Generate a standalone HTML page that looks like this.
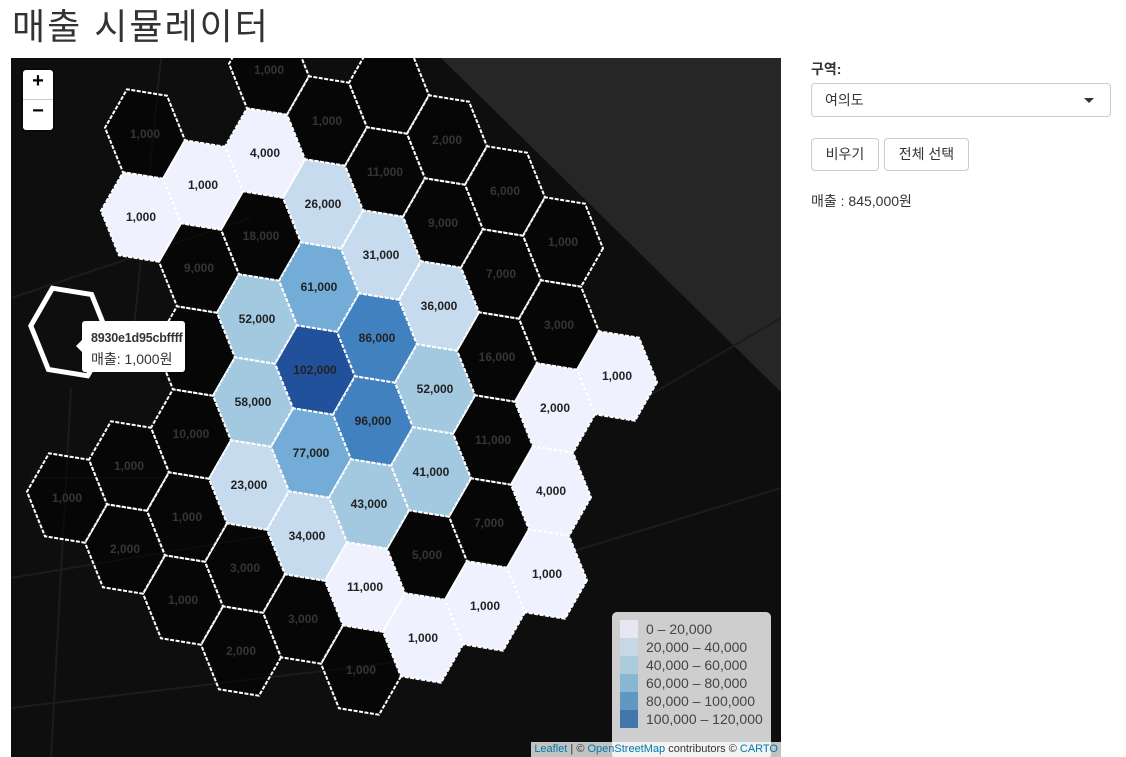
<!DOCTYPE html>
<html><head><meta charset="utf-8"><style>
*{box-sizing:border-box}
body{margin:0;width:1126px;height:757px;overflow:hidden;background:#fff;font-family:"Liberation Sans","Noto Sans CJK KR",sans-serif;color:#333;position:relative}
h1{position:absolute;left:12px;top:-2px;margin:0;font-size:36px;font-weight:400;font-family:"Liberation Sans","Noto Sans CJK KR",sans-serif;color:#333;letter-spacing:2px}
#map{position:absolute;left:11px;top:58px;width:770px;height:699px;overflow:hidden;background:#0e0e0e}
.zoom{position:absolute;left:12px;top:12px;width:30px;height:60px;background:#fff;border-radius:3px;box-shadow:0 0 0 2px rgba(0,0,0,.25)}
.zoom div{height:30px;line-height:28px;text-align:center;font:bold 20px "Liberation Sans",sans-serif;color:#000}
.zoom div:first-child{border-bottom:1px solid #ccc}
.tip{position:absolute;left:71px;top:263px;width:103px;height:51px;background:#fff;border-radius:3px;padding:6px 0 0 9px;font-size:14px;color:#333;line-height:21px;white-space:nowrap}
.tip b{font-size:12.5px;letter-spacing:-0.2px}
.tip:before{content:"";position:absolute;left:-6px;top:19px;border:6px solid transparent;border-left:0;border-right-color:#fff}
.legend{position:absolute;left:601px;top:554px;width:159px;height:147px;background:rgba(255,255,255,.8);border-radius:5px;padding:8px 0 0 8px}
.legend div{height:18px;line-height:18px;font-size:14px;color:#444;white-space:nowrap}
.legend i{display:inline-block;width:18px;height:18px;vertical-align:top;margin-right:8px;opacity:.7}
.attr{position:absolute;right:0;bottom:0;background:rgba(255,255,255,.75);font-size:11px;color:#333;padding:0 3px;height:15px;line-height:15px}
.attr a{color:#0078a8;text-decoration:none}
.lbl{position:absolute;left:811px;top:59px;font-weight:bold;font-size:14px}
.sel{position:absolute;left:811px;top:83px;width:300px;height:34px;border:1px solid #ccc;border-radius:4px;padding:0 13px;line-height:32px;font-size:14px}
.sel:after{content:"";position:absolute;right:16px;top:14px;border:5px solid transparent;border-top:5px solid #333;border-bottom:0}
.btn{position:absolute;top:138px;height:33px;border:1px solid #ccc;border-radius:4px;line-height:31px;font-size:14px;text-align:center}
.tot{position:absolute;left:811px;top:191px;font-size:14px}
</style></head><body>
<h1>매출 시뮬레이터</h1>
<div id="map">
<svg id="s" width="770" height="699" style="position:absolute;left:0;top:0">
<polygon points="430,0 770,0 770,334" fill="#262626"/>
<g stroke="#1c1c1c" stroke-width="2" fill="none">
<path d="M0,240 L240,160 M0,520 L300,470 M0,650 L420,600 M60,330 L40,699 M600,360 L770,260 M540,500 L770,430 M20,420 L360,420 M150,0 L120,300"/>
</g>
<g id="hex"></g>
</svg>
<div class="zoom"><div>+</div><div>−</div></div>
<div class="tip"><b>8930e1d95cbffff</b><br>매출: 1,000원</div>
<div class="legend">
<div><i style="background:#eff3ff"></i>0 – 20,000</div>
<div><i style="background:#c6dbef"></i>20,000 – 40,000</div>
<div><i style="background:#9ecae1"></i>40,000 – 60,000</div>
<div><i style="background:#6baed6"></i>60,000 – 80,000</div>
<div><i style="background:#3182bd"></i>80,000 – 100,000</div>
<div><i style="background:#08519c"></i>100,000 – 120,000</div>
</div>
<div class="attr"><a>Leaflet</a> | © <a>OpenStreetMap</a> contributors © <a>CARTO</a></div>
</div>
<div class="lbl">구역:</div>
<div class="sel">여의도</div>
<div class="btn" style="left:811px;width:68px">비우기</div>
<div class="btn" style="left:884px;width:85px">전체 선택</div>
<div class="tot">매출 : 845,000원</div>
<script>
var O=[304,312],A=[62,-32],B=[-4,83];
var V=[[40,6.3],[18,44.7],[-22,38.3],[-40,-6.3],[-18,-44.7],[22,-38.3]];
function c(i,j){return[O[0]+i*A[0]+j*B[0],O[1]+i*A[1]+j*B[1]];}
function col(v){return v<20?"#eff2fe":v<40?"#c7dbef":v<60?"#a3c9e1":v<80?"#72acd7":v<100?"#4281bf":"#21519b";}
var F=[[0,0,102],[1,0,86],[1,1,96],[0,1,77],[-1,0,58],[0,-1,61],[-1,-1,52],[1,-1,31],[2,0,36],[2,1,52],[2,2,41],[1,2,43],[-1,1,23],[0,2,34],[0,-2,26],[-1,-3,4],[-2,-3,1],[-3,-3,1],[1,3,11],[2,4,1],[3,4,1],[4,4,1],[4,3,4],[4,2,2],[5,2,1]];
var D=[[-3,-4,1],[-1,-4,1],[0,-3,1],[1,-3,0],[1,-2,11],[2,-2,2],[2,-1,9],[3,-1,6],[4,0,1],[3,0,7],[4,1,3],[3,1,16],[3,2,11],[3,3,7],[2,3,5],[1,4,1],[0,3,3],[-1,3,2],[-2,2,1],[-1,2,3],[-3,1,2],[-4,0,1],[-3,0,1],[-2,1,1],[-2,0,10],[-2,-1,0],[-1,-2,18],[-2,-2,9]];
var h="";
function pts(p,s){return V.map(function(v){return (p[0]+v[0]*s).toFixed(1)+","+(p[1]+v[1]*s).toFixed(1)}).join(" ");}
function fmt(v){return v+",000";}
D.forEach(function(d){var p=c(d[0],d[1]);h+='<polygon points="'+pts(p,1)+'" fill="#000" fill-opacity="0.55" stroke="#fff" stroke-width="2" stroke-dasharray="4,1.5"/>';if(d[2])h+='<text x="'+p[0]+'" y="'+(p[1]+4)+'" text-anchor="middle" font-family="Liberation Sans" font-weight="bold" font-size="12" fill="#353535">'+fmt(d[2])+'</text>';});
F.forEach(function(d){var p=c(d[0],d[1]);h+='<polygon points="'+pts(p,1)+'" fill="'+col(d[2])+'" stroke="#fff" stroke-width="2" stroke-dasharray="4,1.5"/>';h+='<text x="'+p[0]+'" y="'+(p[1]+4)+'" text-anchor="middle" font-family="Liberation Sans" font-weight="bold" font-size="12" fill="#222">'+fmt(d[2])+'</text>';});
h+='<polygon points="'+pts([59,274],0.98)+'" fill="none" stroke="#fff" stroke-width="5"/>';
document.getElementById("hex").innerHTML=h;
</script>
</body></html>
